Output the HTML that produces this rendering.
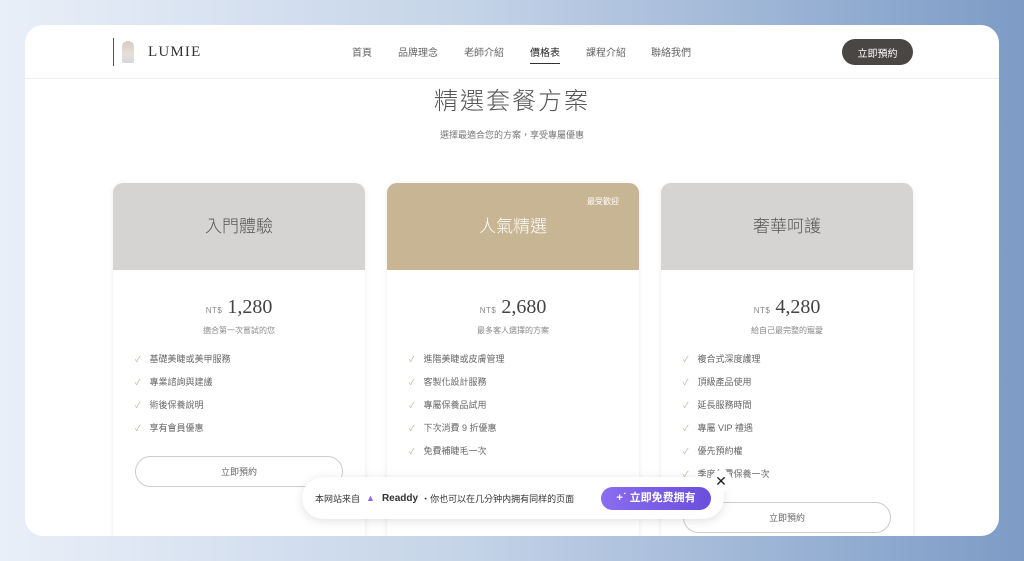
<!DOCTYPE html>
<html><head><meta charset="utf-8"><style>
*{margin:0;padding:0;box-sizing:border-box}
body{width:1024px;height:561px;overflow:hidden;background:linear-gradient(90deg,#e9eff8 0%,#c5d4e8 45%,#7c9bc6 100%);font-family:"Liberation Sans","Noto Sans CJK TC",sans-serif;position:relative}
.panel{position:absolute;left:25px;top:25px;width:974px;height:511px;background:#fff;border-radius:18px;overflow:hidden}
.nav{position:absolute;left:0;top:0;width:974px;height:54px;border-bottom:1px solid #f0efee}
.logo{position:absolute;left:88px;top:13px;height:28px;border-left:1px solid #555;padding-left:8px;display:flex;align-items:center}
.logo .ic{width:12px;height:22px;background:linear-gradient(#d9cbbf,#e7dfd8 60%,#cfd8dc);border-radius:6px 6px 2px 2px;margin-right:14px}
.logo span{font-family:"Liberation Serif",serif;font-size:15px;letter-spacing:1.2px;color:#333}
.nav a{position:absolute;top:23px;font-size:10px;color:#666;text-decoration:none;line-height:12px}
.nav a.act{color:#222;border-bottom:1px solid #333;padding-bottom:3px}
.btn{position:absolute;left:817px;top:14px;width:71px;height:26px;background:#4a4644;color:#fff;border-radius:13px;font-size:10px;text-align:center;line-height:26px;padding-top:3px}
h1{position:absolute;top:62px;left:0;width:974px;text-align:center;font-weight:300;font-size:24px;line-height:30px;color:#555;letter-spacing:2px}
.sub{position:absolute;top:103px;left:0;width:974px;text-align:center;font-size:9px;color:#777}
.card{position:absolute;top:158px;width:252px;height:400px;background:#fff;border-radius:10px;box-shadow:0 1px 6px rgba(0,0,0,.08);overflow:hidden}
.hd{height:87px;background:#d6d4d2;text-align:center;line-height:87px;font-size:17px;color:#555;font-weight:300}
.gold .hd{background:#c8b593;color:#fff}
.tag{position:absolute;right:20px;top:14px;font-size:8px;color:#fff;line-height:10px}
.price{text-align:center;margin-top:26px;font-family:"Liberation Serif",serif;font-size:20px;color:#444}
.price small{font-family:"Liberation Sans",sans-serif;font-size:8px;color:#888;letter-spacing:.5px}
.d{text-align:center;font-size:8px;color:#888;margin-top:6px}
ul{list-style:none;margin:16px 0 0 22px}
li{font-size:9px;color:#666;height:23px}
li:before{content:"✓";color:#b9b09c;font-size:8px;margin-right:9px}
.ob{position:absolute;left:22px;width:208px;height:31px;border:1px solid #ccc;border-radius:16px;text-align:center;line-height:30px;font-size:9px;color:#666}
.pop{position:absolute;left:302px;top:477px;width:422px;height:42px;background:#fff;border-radius:21px;box-shadow:0 2px 10px rgba(0,0,0,.12);font-size:9px;color:#333;display:flex;align-items:center;padding-left:13px}
.pop b{font-size:10px;margin:0 3px}
.pb{position:absolute;left:299px;top:10px;width:110px;height:23px;border-radius:12px;background:linear-gradient(90deg,#8a6cf0,#6a4fdc);color:#fff;font-size:11px;font-weight:bold;text-align:center;line-height:23px}
.x{position:absolute;left:710px;top:470px;width:22px;height:22px;border-radius:11px;background:#fff;text-align:center;line-height:22px;font-size:14px;color:#222}
</style></head><body>
<div class="panel">
<div class="nav">
<div class="logo"><div class="ic"></div><span>LUMIE</span></div>
<a style="left:327px">首頁</a><a style="left:373px">品牌理念</a><a style="left:439px">老師介紹</a><a class="act" style="left:505px">價格表</a><a style="left:561px">課程介紹</a><a style="left:626px">聯絡我們</a>
<div class="btn">立即預約</div>
</div>
<h1>精選套餐方案</h1>
<div class="sub">選擇最適合您的方案，享受專屬優惠</div>
<div class="card" style="left:88px"><div class="hd">入門體驗</div>
<div class="price"><small>NT$</small> 1,280</div><div class="d">適合第一次嘗試的您</div>
<ul><li>基礎美睫或美甲服務</li><li>專業諮詢與建議</li><li>術後保養說明</li><li>享有會員優惠</li></ul>
<div class="ob" style="top:273px">立即預約</div></div>
<div class="card gold" style="left:362px"><div class="hd">人氣精選</div><div class="tag">最受歡迎</div>
<div class="price"><small>NT$</small> 2,680</div><div class="d">最多客人選擇的方案</div>
<ul><li>進階美睫或皮膚管理</li><li>客製化設計服務</li><li>專屬保養品試用</li><li>下次消費 9 折優惠</li><li>免費補睫毛一次</li></ul></div>
<div class="card" style="left:636px"><div class="hd">奢華呵護</div>
<div class="price"><small>NT$</small> 4,280</div><div class="d">給自己最完整的寵愛</div>
<ul><li>複合式深度護理</li><li>頂級產品使用</li><li>延長服務時間</li><li>專屬 VIP 禮遇</li><li>優先預約權</li><li>季度免費保養一次</li></ul>
<div class="ob" style="top:319px">立即預約</div></div>
</div>
<div class="pop">本网站来自 <span style="color:#8a6cf0;margin:0 4px 0 6px">▲</span><b>Readdy</b>・你也可以在几分钟内拥有同样的页面<div class="pb">+˙ 立即免费拥有</div></div>
<div class="x">✕</div>
</body></html>
